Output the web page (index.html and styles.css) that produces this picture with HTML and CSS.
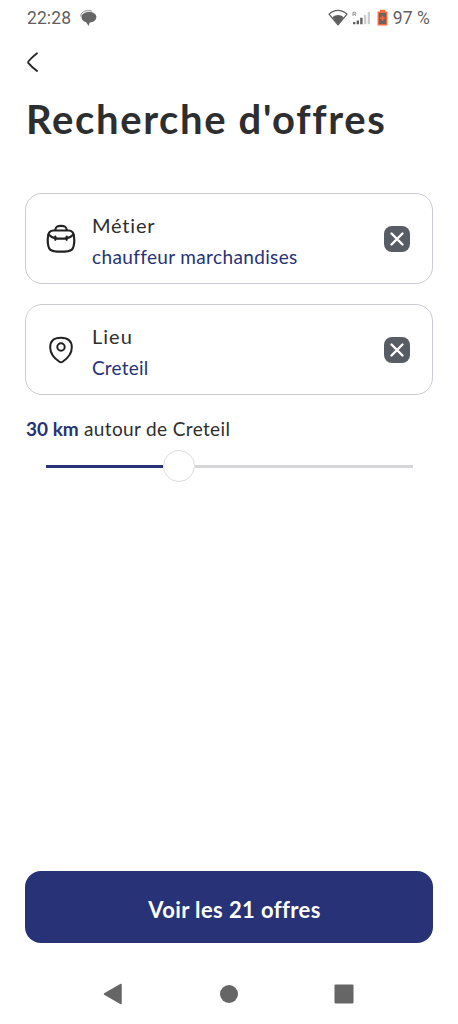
FILE: index.html
```html
<!DOCTYPE html>
<html lang="fr">
<head>
<meta charset="utf-8">
<title>Recherche d'offres</title>
<link rel="stylesheet" href="styles.css">
</head>
<body>
<div class="screen">
  <header class="status">
    <div class="status-left">
      <span class="clock">22:28</span>
      <svg class="chat" width="17" height="17" viewBox="0 0 17 17"><path d="M.8 6.500C.6 3 3.500.9 7.500.7c2-.1 3.300.1 4.500.5" fill="none" stroke="#777" stroke-width=".9"/><path d="M9 2c4.300 0 7.400 2 7.400 5 0 3-2.600 5.200-6.700 5.500L8.600 16 6 12.100C3.200 11.400 1.500 9.600 1.500 7.200c0-3 3-5.200 7.500-5.200z" fill="#666"/></svg>
    </div>
    <div class="status-right">
      <svg class="wifi" width="20" height="18" viewBox="0 0 20 18"><path d="M1 5.200C6.500.1 13.500.1 19 5.200L10 15.800z" fill="none" stroke="#5f5f5f" stroke-width="1.300" stroke-linejoin="round"/><path d="M4.400 8.200C8 5.400 12 5.400 15.600 8.200L10 15.800z" fill="#5f5f5f"/></svg>
      <svg class="signal" width="19" height="18" viewBox="0 0 19 18"><path d="M1 7V3.200h1.800q1.100 0 1.100 1t-1.100 1H1M2.700 5.200L4 7" fill="none" stroke="#888" stroke-width=".9"/><path d="M1 13h2.400v2.200H1zM4.600 11.500H7v3.700H4.600zM8.200 8.700h2.400v6.500H8.200z" fill="#5f5f5f"/><path d="M12 6h2.300v9.200H12zM15.700 3H18v12.200h-2.300z" fill="#ccc"/></svg>
      <svg class="battery" width="11" height="18" viewBox="0 0 11 18"><path d="M3 .8h5v1.700h2.400v14H.6v-14H3z" fill="#f5693f"/><path d="M2 4h7v11H2z" fill="#666"/><path d="M5.500 6.800v5M3 9.300h5" stroke="#f5693f" stroke-width="1.500"/></svg>
      <span class="level">97 %</span>
    </div>
  </header>
  <button class="back" aria-label="Retour"><svg width="12" height="22" viewBox="0 0 12 22"><path d="M10 2.200C6.500 5 3.700 7.700 1.700 10c-.7.800-.7 1.600 0 2.400C3.700 14.800 6.500 17.300 10 20" fill="none" stroke="#222" stroke-width="1.800" stroke-linecap="round"/></svg></button>
  <h1 class="title">Recherche d'offres</h1>

  <main class="form">
    <section class="card">
      <svg class="card-icon" width="30" height="30" viewBox="0 0 30 30" fill="none" stroke="#222" stroke-width="2.200" stroke-linecap="round" stroke-linejoin="round"><path d="M7 6.500h16c4 0 5.300 3 5.300 9.300 0 4.700-.5 8-2.500 9.800-2 1.700-5.600 2.100-10.800 2.100s-8.800-.4-10.800-2.100c-2-1.800-2.500-5.100-2.500-9.800C1.700 9.500 3 6.500 7 6.500z"/><path d="M9.300 6c.3-3.100 1.500-4.200 5.700-4.200S20.400 2.900 20.700 6M2.500 10.500c2.200 2.300 4 3.100 6.400 3.600 4 .7 8.200.7 12.200 0 2.400-.5 4.200-1.300 6.400-3.600M9.300 12.600v3.200M20.700 12.600v3.200"/></svg>
      <div class="card-text"><div class="label label-job">Métier</div><div class="value value-job">chauffeur marchandises</div></div>
      <button class="clear" aria-label="Effacer"><svg width="26" height="26" viewBox="0 0 26 26"><rect width="26" height="26" rx="8" fill="#585c65"/><path d="M7.500 7.500l11 11M18.500 7.500l-11 11" stroke="#fff" stroke-width="2.400" stroke-linecap="round"/></svg></button>
    </section>
    <section class="card">
      <svg class="card-icon" width="30" height="30" viewBox="0 0 30 30" fill="none" stroke="#222" stroke-width="2" stroke-linejoin="round"><path d="M15 2.800c7.700 0 10.800 3.200 10.800 9.600 0 6-4.300 10.900-9.200 14.300q-1.600 1.100-3.200 0C8.500 23.300 4.200 18.400 4.200 12.400 4.200 6 7.300 2.800 15 2.800z"/><circle cx="15" cy="12" r="3.700"/></svg>
      <div class="card-text"><div class="label label-place">Lieu</div><div class="value value-place">Creteil</div></div>
      <button class="clear" aria-label="Effacer"><svg width="26" height="26" viewBox="0 0 26 26"><rect width="26" height="26" rx="8" fill="#585c65"/><path d="M7.500 7.500l11 11M18.500 7.500l-11 11" stroke="#fff" stroke-width="2.400" stroke-linecap="round"/></svg></button>
    </section>
    <p class="radius"><strong>30 km</strong> autour de Creteil</p>
    <div class="slider"><div class="track-done"></div><div class="thumb"></div><div class="track-rest"></div></div>
  </main>

  <button class="submit">Voir les 21 offres</button>
  <nav class="navbar">
    <svg width="20" height="22" viewBox="0 0 20 22"><path d="M1.500 11L18 1.500v19z" fill="#666" stroke="#666" stroke-width="1.500" stroke-linejoin="round"/></svg>
    <svg width="20" height="22" viewBox="0 0 20 22"><circle cx="10" cy="11" r="9" fill="#666"/></svg>
    <svg width="20" height="22" viewBox="0 0 20 22"><rect x=".5" y="1.500" width="19" height="19" rx="1" fill="#666"/></svg>
  </nav>
</div>
</body>
</html>
```
FILE: styles.css
```css
* { box-sizing: border-box; }
body { margin: 0; background: #fff; font-family: Lato, sans-serif; color: #2d2e30; }
button { border: 0; padding: 0; background: none; font: inherit; display: block; }
svg { display: block; flex: none; }
.screen { width: 458px; height: 1024px; display: flex; flex-direction: column; white-space: nowrap; overflow: hidden; }
.status { height: 36px; padding: 0 28px 0 27px; display: flex; justify-content: space-between; align-items: center; font: 400 17.5px/36px Roboto, sans-serif; color: #5f5f5f; letter-spacing: 0.1px; }
.status-left, .status-right { display: flex; align-items: center; }
.chat { margin-left: 9px; }
.signal { margin-left: 4px; }
.battery { margin: 0 5px 0 6px; }
.back { margin: 15px 0 0 27px; width: 12px; height: 22px; }
.title { margin: 20px 0 0 26px; height: 52px; font-size: 40px; line-height: 52px; font-weight: 700; letter-spacing: 1.64px; }
.form { margin: 48px 25px 0; flex: 1; }
.card { height: 91px; margin-bottom: 20px; padding: 0 22px 0 20px; display: flex; align-items: center; border: 1px solid #cacad5; border-radius: 17px; }
.card-text { margin: 4px 0 0 16px; flex: 1; }
.label { font-size: 20px; line-height: 32px; letter-spacing: 0.8px; }
.label-place { letter-spacing: 1px; }
.value { font-size: 19px; line-height: 32px; letter-spacing: 0.36px; color: #273277; }
.value-place { letter-spacing: 0.2px; }
.radius { margin: -2px 0 0 1px; font-size: 19px; line-height: 32px; letter-spacing: 0.37px; }
.radius strong { color: #273277; letter-spacing: 0; }
.slider { margin: 4px 20px 0 21px; height: 34px; display: flex; align-items: center; }
.track-done { width: 117px; height: 3px; background: #273277; }
.thumb { width: 32px; height: 32px; border: 1px solid #ddd; border-radius: 50%; background: #fff; }
.track-rest { flex: 1; height: 3px; background: #d6d6d8; }
.submit { margin: 0 25px; height: 72px; border-radius: 16px; background: #283276; color: #fff; font-size: 22px; font-weight: 700; letter-spacing: 0.4px; padding: 4px 0 0 11px; text-align: center; }
.navbar { height: 81px; padding: 20px 104px 0 103px; display: flex; justify-content: space-between; align-items: center; }
```
